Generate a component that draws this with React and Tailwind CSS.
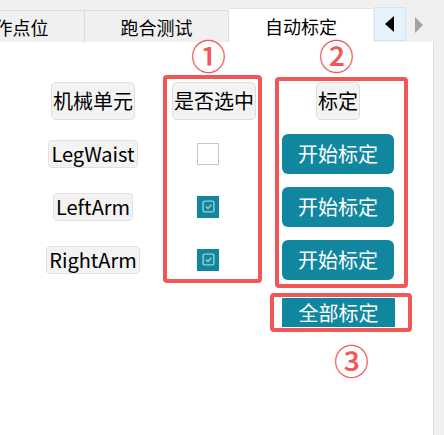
import React from "react";

const teal = "bg-[#11879f]";

const HeadBtn = ({ children }) => (
    <div className="h-[38px] px-[1px] flex items-center rounded-[5px] bg-[#f3f3f3] border border-[#dedede] text-[20px] leading-none text-black">{children}</div>
);

const NameBtn = ({ children }) => (
    <div className="h-[28px] px-[2px] flex items-center rounded-[4px] bg-[#f3f3f3] border border-[#e2e2e2] text-[20px] leading-none text-black">{children}</div>
);

const Check = ({ on }) =>
    on ? (
        <div className={`w-[22px] h-[22px] ${teal} flex items-center justify-center`}>
            <svg width="13" height="13" viewBox="0 0 12 12">
                <rect x="1" y="1" width="10" height="10" rx="1.5" fill="none" stroke="#9fcbd6" strokeWidth="1.3" />
                <path d="M3.5 6 L5.5 7.8 L8.6 4.4" fill="none" stroke="#9fcbd6" strokeWidth="1.3" />
            </svg>
        </div>
    ) : (
        <div className="w-[22px] h-[22px] bg-white border border-[#c8c8c8]"></div>
    );

const StartBtn = () => (
    <div className={`w-[112px] h-[40px] rounded-[6px] ${teal} flex items-center justify-center text-white text-[20px] leading-none`}>开始标定</div>
);

const rows = [
    { name: "LegWaist", on: false },
    { name: "LeftArm", on: true },
    { name: "RightArm", on: true },
];

export default function App() {
    return (
        <div className="w-[444px] h-[435px] bg-[#f0f0f0] relative overflow-hidden" style={{ fontFamily: '"Noto Sans CJK SC", "Microsoft YaHei", sans-serif' }}>
            {/* tabs, strip scrolled left */}
            <div className="flex items-end h-[42px] w-[433px] overflow-hidden">
                <div className="flex items-end ml-[-59px] text-[18px] leading-none text-black">
                    <div className="w-[144px] h-[32px] flex items-center justify-center bg-[#f0f0f0] border-t border-r border-[#dcdcdc]">动作点位</div>
                    <div className="w-[144px] h-[32px] flex items-center justify-center bg-[#f0f0f0] border-t border-r border-[#dcdcdc]">跑合测试</div>
                    <div className="w-[144px] h-[34px] flex items-center justify-center bg-white border-t border-[#e3e3e3]">自动标定</div>
                    <div className="w-[32px] h-[34px] mb-[1px] ml-[1px] flex items-center justify-center bg-[#e5f1fb] border border-[#cfe4f6]">
                        <svg width="10" height="16" viewBox="0 0 10 16"><path d="M9 0 L0 8 L9 16 Z" fill="#000" /></svg>
                    </div>
                    <div className="w-[26px] h-[34px] flex items-center justify-center">
                        <svg width="8" height="16" viewBox="0 0 8 16"><path d="M0 0 L8 8 L0 16 Z" fill="#a3a3a3" /></svg>
                    </div>
                </div>
            </div>

            {/* panel */}
            <div className="w-[434px] h-[393px] bg-white border-r border-[#dadada] pt-[32px]">
                <div className="flex h-[53px] items-center">
                    <div className="w-[172px] pl-[14px] flex justify-center"><HeadBtn>机械单元</HeadBtn></div>
                    <div className="w-[84px] flex justify-center"><HeadBtn>是否选中</HeadBtn></div>
                    <div className="w-[164px] flex justify-center"><HeadBtn>标定</HeadBtn></div>
                </div>
                {rows.map(r => (
                    <div key={r.name} className="flex h-[53px] items-center">
                        <div className="w-[172px] pl-[14px] flex justify-center"><NameBtn>{r.name}</NameBtn></div>
                        <div className="w-[84px] flex justify-center pr-[12px]"><Check on={r.on} /></div>
                        <div className="w-[164px] flex justify-center"><StartBtn /></div>
                    </div>
                ))}
                <div className="flex mt-[12px]">
                    <div className="w-[282px]"></div>
                    <div className={`w-[113px] h-[29px] ${teal} flex items-center justify-center text-white text-[20px] leading-none`}>全部标定</div>
                </div>
            </div>

            {/* annotations */}
            <div className="absolute left-[163px] top-[75px] w-[99px] h-[208px] border-[4px] border-[#f25757] rounded-[4px]"></div>
            <div className="absolute left-[275px] top-[77px] w-[133px] h-[211px] border-[4px] border-[#f25757] rounded-[4px]"></div>
            <div className="absolute left-[270px] top-[293px] w-[142px] h-[39px] border-[4px] border-[#f25757] rounded-[4px]"></div>
            <div className="absolute left-[191px] top-[37px] text-[#f25757] text-[35px] font-medium leading-none">①</div>
            <div className="absolute left-[319px] top-[37px] text-[#f25757] text-[35px] font-medium leading-none">②</div>
            <div className="absolute left-[334px] top-[342px] text-[#f25757] text-[35px] font-medium leading-none">③</div>
        </div>
    );
}
